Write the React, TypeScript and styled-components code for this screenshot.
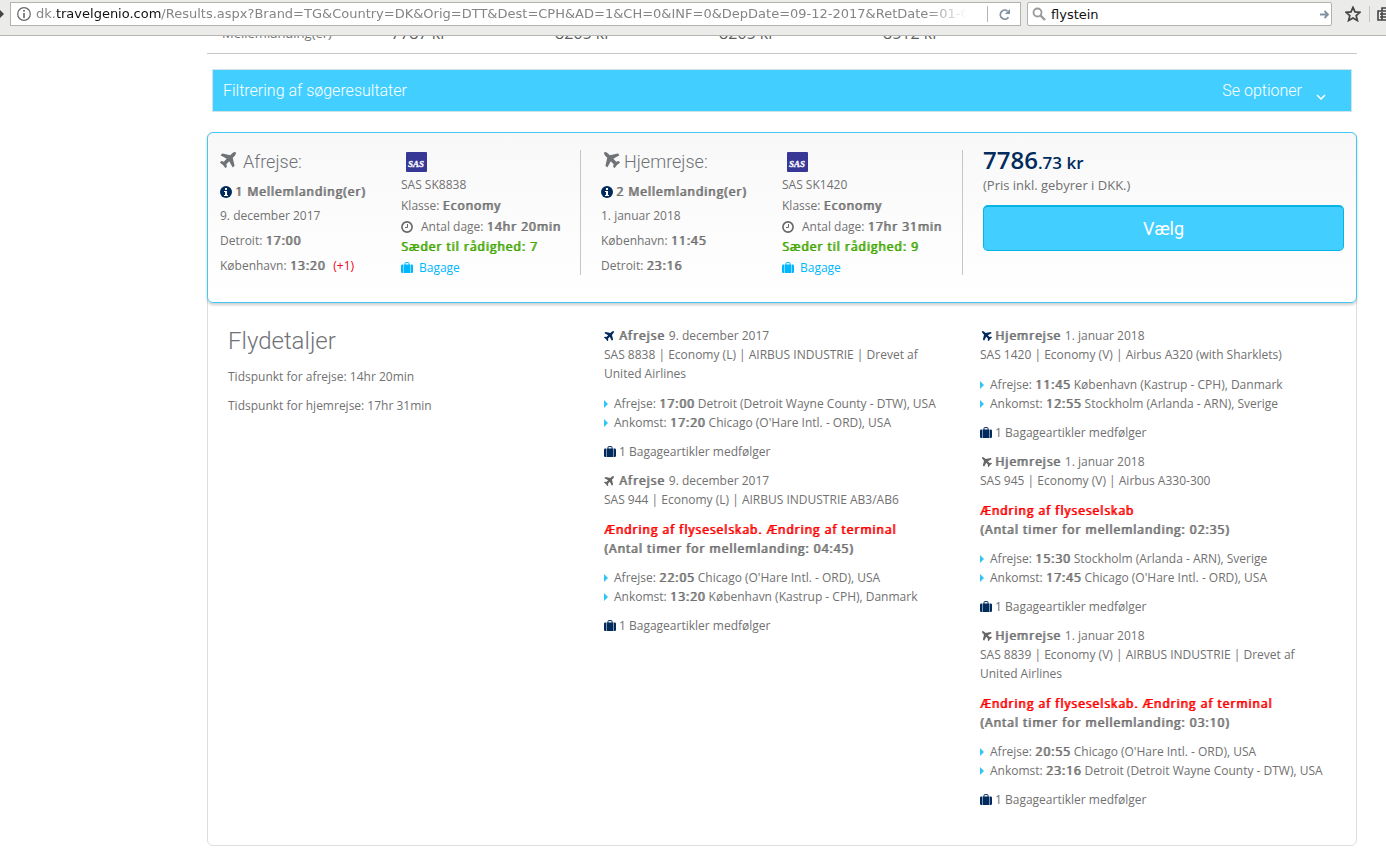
import React from "react";
import styled, { createGlobalStyle, css } from "styled-components";

const Global = createGlobalStyle`
  *{box-sizing:border-box}
  body{margin:0;background:#fff;color:#717171;font:12px/19px "Open Sans",sans-serif}
  h2,h3,p,ul{margin:0;padding:0;font-weight:400}
`;

const strongText = css`
  font-weight:400;letter-spacing:1px;text-shadow:1px 0 0 currentColor;
`;

const Toolbar = styled.header`
  display:flex;align-items:flex-start;height:36px;padding-top:2px;overflow:hidden;
  background:#ebebe9;border-bottom:1px solid #b4b4b0;
`;
const BackEdge = styled.div`width:10px;height:24px;overflow:hidden;display:flex;align-items:center;`;
const UrlBox = styled.div`
  flex:1;min-width:0;height:24px;display:flex;align-items:center;
  background:#fff;border:1px solid #b2b2ae;
`;
const SiteInfo = styled.span`display:flex;flex:none;margin:0 5px 0 6px;`;
const Url = styled.div`
  flex:1;min-width:0;overflow:hidden;white-space:nowrap;color:#858585;
  font:13px/22px "DejaVu Sans",sans-serif;
  mask-image:linear-gradient(to right,#000 calc(100% - 60px),transparent calc(100% - 20px));
  b{font-weight:400;color:#111}
`;
const IconButton = styled.button`
  border:0;padding:0;background:none;display:flex;align-items:center;justify-content:center;
  width:32px;height:16px;flex:none;
`;
const Reload = styled(IconButton)`width:33px;border-left:1px solid #b4b4b4;`;
const SearchBox = styled.label`
  display:flex;align-items:center;width:305px;height:24px;margin-left:6px;padding:0 2px 0 4px;
  background:#fff;border:1px solid #b2b2ae;border-radius:2px;
  input{flex:1;min-width:0;border:0;outline:0;padding:0 0 0 5px;background:none;color:#111;font:13px "DejaVu Sans",sans-serif}
`;
const Tools = styled.div`
  display:flex;align-items:center;width:54px;height:24px;padding-left:5px;overflow:hidden;
  ${IconButton}+${IconButton}{border-left:1px solid #c4c4c4;justify-content:flex-start;padding-left:7px}
`;

const Page = styled.main`padding:0 29px 14px 207px;overflow:hidden;`;
const PriceRow = styled.div`
  display:grid;grid-template-columns:169px repeat(4,164px) 1fr;align-items:end;
  margin-top:-13px;padding:0 0 9px 15px;border-bottom:1px solid #c8c8c8;
  font-size:13px;line-height:21px;
  b{font-weight:400;font-size:16px;color:#5d5d5d}
`;
const FilterBar = styled.button`
  display:flex;justify-content:space-between;align-items:center;width:calc(100% - 10px);height:43px;
  margin:15px 5px 0;padding:0 25px 0 10px;border:1px solid #cfe3ea;background:#42cfff;
  color:#fff;font:300 16px Roboto,sans-serif;
  span{display:flex;align-items:center;gap:14px}
  svg{margin-top:12px}
`;

const Card = styled.section`margin-top:20px;border:1px solid #ddd;border-radius:6px;`;
const Summary = styled.div`
  display:grid;grid-template-columns:361px 382px minmax(0,1fr);align-items:start;min-height:171px;
  margin:-1px;padding:17px 12px 0;border:1px solid #42c8f5;border-radius:6px;
  background:linear-gradient(#f8f8f8,#fff);box-shadow:0 2px 3px rgba(0,0,0,.2);
`;
const Leg = styled.div<{ $back?: boolean }>`
  display:grid;grid-template-columns:181px 1fr;height:125px;border-right:1px solid #c6c6c6;
  padding-left:${(p) => (p.$back ? 20 : 0)}px;
`;
const LegTitle = styled.h2<{ $back?: boolean }>`
  display:flex;align-items:center;gap:${(p) => (p.$back ? 4 : 7)}px;height:23px;
  padding-left:${(p) => (p.$back ? 3 : 0)}px;
  font:300 18px/23px Roboto,sans-serif;color:#6f7276;
  svg{margin-bottom:3px}
`;
const Stops = styled.p`
  display:flex;align-items:center;gap:3px;height:21px;margin:8px 0 1px;white-space:nowrap;
`;
const B = styled.b`${strongText}`;
const LegLine = styled.p`height:25px;line-height:25px;white-space:nowrap;`;
const NextDay = styled.span`color:#f00020;margin-left:8px;`;
const Flight = styled.div`line-height:21px;white-space:nowrap;`;
const Carrier = styled.p`display:flex;align-items:center;height:24px;padding-left:5px;`;
const FlightRow = styled.p`display:flex;align-items:center;height:21px;gap:8px;`;
const Seats = styled.p`height:20px;line-height:20px;color:#42a800;${strongText}`;
const Bag = styled.a`display:flex;align-items:center;gap:6px;height:21px;color:#00b7ff;text-decoration:none;`;
const Offer = styled.div`padding-left:20px;`;
const Price = styled.div`
  font-weight:600;font-size:17px;line-height:20px;color:#002b5c;
  strong{font-weight:600;font-size:24px}
`;
const Note = styled.p`font-size:13px;line-height:24px;`;
const Select = styled.button`
  display:block;width:100%;height:46px;margin-top:8px;border:1px solid #08b4e4;border-top-width:2px;
  border-radius:5px;background:#42cfff;color:#fff;font:400 18px Roboto,sans-serif;
`;

const Details = styled.div`
  display:grid;grid-template-columns:376px 376px minmax(0,1fr);padding:24px 20px 26px;
`;
const DetailTitle = styled.h2`font:300 24px/30px Roboto,sans-serif;margin-bottom:11px;color:#6f7276;`;
const Duration = styled.p`margin-bottom:10px;`;
const Segment = styled.article`padding-right:30px;margin-bottom:10px;`;
const Head = styled.div`margin-bottom:11px;`;
const HeadLine = styled.h3<{ $back?: boolean }>`
  display:flex;align-items:center;font-size:12px;
  svg{margin-left:${(p) => (p.$back ? 2 : 0)}px;margin-right:${(p) => (p.$back ? 3 : 5)}px}
  span{margin-left:4px}
`;
const Change = styled.p`
  ${strongText}
  margin-bottom:10px;
  em{display:block;font-style:normal;color:#f00}
`;
const Stations = styled.ul`
  list-style:none;margin-bottom:10px;white-space:nowrap;
  li{display:flex;align-items:center;gap:4px}
  li::before{content:"";border:solid transparent;border-width:4px 0 4px 4px;border-left-color:#30c5f5;margin-right:2px}
`;
const Included = styled.p`display:flex;align-items:center;gap:3px;`;

const Plane = ({ size, color, back }: { size: number; color: string; back?: boolean }) => (
  <svg width={size} height={size} viewBox="0 0 1408 1408" fill={color} aria-hidden="true">
    <path transform={back ? "rotate(-90 704 704)" : undefined}
      d="M1376 32q44 52 12 148t-108 172l-161 161 160 696q5 19-12 33l-128 96q-7 6-19 6-4 0-7-1-15-3-21-16l-279-508-259 259 53 194q5 17-8 31l-96 96q-9 9-23 9h-2q-15-2-24-13l-189-252-252-189q-11-7-13-23-1-13 9-25l96-97q9-9 23-9 6 0 8 1l194 53 259-259-508-279q-14-8-17-24-2-16 9-27l128-128q14-13 30-8l665 159 160-160q76-76 172-108t148 12z" />
  </svg>
);
const Info = () => (
  <svg width="12" height="12" viewBox="0 0 12 12" aria-hidden="true">
    <circle cx="6" cy="6" r="6" fill="#002b5c" />
    <path d="M5 2h2v2H5zM4 5h3v4h1v1H4V9h1V6H4z" fill="#fff" />
  </svg>
);
const Clock = () => (
  <svg width="12" height="12" viewBox="0 0 12 12" fill="none" stroke="#666" aria-hidden="true">
    <circle cx="6" cy="6" r="5.1" strokeWidth="1.6" /><path d="M6.5 3v3.5H4" />
  </svg>
);
const Case = ({ color }: { color: string }) => (
  <svg width="12" height="11" viewBox="0 0 12 11" fill={color} aria-hidden="true">
    <path d="M2.6 2.500h6.800V11H2.600zM2.100 2.500V11h-.8Q0 11 0 9.700V3.800Q0 2.500 1.300 2.500zM9.900 2.500V11h.8Q12 11 12 9.700V3.800Q12 2.500 10.700 2.500z" />
    <path d="M4 3V1.200Q4 .6 4.600.6h2.800Q8 .6 8 1.200V3" fill="none" stroke={color} />
  </svg>
);
const SasLogo = styled.svg`
  text{font:italic 700 9px "Liberation Serif",serif;fill:#fff;stroke:#fff;stroke-width:.3px}
`;
const Sas = () => (
  <SasLogo width="21" height="20" viewBox="0 0 21 20" role="img" aria-label="SAS">
    <rect width="21" height="20" rx="1" fill="#373895" />
    <text x="10" y="15" textAnchor="middle">SAS</text>
  </SasLogo>
);

type LegData = { back?: boolean; title: string; stops: string; date: string; from: string; dep: string; to: string; arr: string; next?: string; code: string; time: string; seats: number };
const legs: LegData[] = [
  { title: "Afrejse:", stops: "1 Mellemlanding(er)", date: "9. december 2017", from: "Detroit:", dep: "17:00", to: "København:", arr: "13:20", next: "(+1)", code: "SAS SK8838", time: "14hr 20min", seats: 7 },
  { back: true, title: "Hjemrejse:", stops: "2 Mellemlanding(er)", date: "1. januar 2018", from: "København:", dep: "11:45", to: "Detroit:", arr: "23:16", code: "SAS SK1420", time: "17hr 31min", seats: 9 },
];

type Seg = { info: string; change?: string; wait?: string; dep: [string, string]; arr: [string, string] };
const outbound: Seg[] = [
  { info: "SAS 8838 | Economy (L) | AIRBUS INDUSTRIE | Drevet af United Airlines", dep: ["17:00", "Detroit (Detroit Wayne County - DTW), USA"], arr: ["17:20", "Chicago (O'Hare Intl. - ORD), USA"] },
  { info: "SAS 944 | Economy (L) | AIRBUS INDUSTRIE AB3/AB6", change: "Ændring af flyseselskab. Ændring af terminal", wait: "04:45", dep: ["22:05", "Chicago (O'Hare Intl. - ORD), USA"], arr: ["13:20", "København (Kastrup - CPH), Danmark"] },
];
const inbound: Seg[] = [
  { info: "SAS 1420 | Economy (V) | Airbus A320 (with Sharklets)", dep: ["11:45", "København (Kastrup - CPH), Danmark"], arr: ["12:55", "Stockholm (Arlanda - ARN), Sverige"] },
  { info: "SAS 945 | Economy (V) | Airbus A330-300", change: "Ændring af flyseselskab", wait: "02:35", dep: ["15:30", "Stockholm (Arlanda - ARN), Sverige"], arr: ["17:45", "Chicago (O'Hare Intl. - ORD), USA"] },
  { info: "SAS 8839 | Economy (V) | AIRBUS INDUSTRIE | Drevet af United Airlines", change: "Ændring af flyseselskab. Ændring af terminal", wait: "03:10", dep: ["20:55", "Chicago (O'Hare Intl. - ORD), USA"], arr: ["23:16", "Detroit (Detroit Wayne County - DTW), USA"] },
];

const Segments = ({ items, back, name, date }: { items: Seg[]; back?: boolean; name: string; date: string }) => (
  <div>
    {items.map((s, i) => (
      <Segment key={s.info}>
        <Head>
          <HeadLine $back={back}>
            <Plane size={10} color={i === 0 ? "#002b5c" : "#666"} back={back} />
            <B>{name}</B><span>{date}</span>
          </HeadLine>
          <p>{s.info}</p>
        </Head>
        {s.change && <Change><em>{s.change}</em>(Antal timer for mellemlanding: {s.wait})</Change>}
        <Stations>
          <li><span>Afrejse: <B>{s.dep[0]}</B> {s.dep[1]}</span></li>
          <li><span>Ankomst: <B>{s.arr[0]}</B> {s.arr[1]}</span></li>
        </Stations>
        <Included><Case color="#002b5c" />1 Bagageartikler medfølger</Included>
      </Segment>
    ))}
  </div>
);

export default function App() {
  return (
    <>
      <Global />
      <Toolbar>
        <BackEdge><svg width="6" height="12" viewBox="0 0 6 12"><path d="M0 2l4 4-4 4z" fill="#444" /></svg></BackEdge>
        <UrlBox>
          <SiteInfo aria-hidden="true">
            <svg width="14" height="14" viewBox="0 0 14 14" fill="none" stroke="#666"><circle cx="7" cy="7" r="6.3" strokeWidth="1.2" /><path d="M7 6v5M7 3v1.700" strokeWidth="1.6" /></svg>
          </SiteInfo>
          <Url>dk.<b>travelgenio.com</b>/Results.aspx?Brand=TG&amp;Country=DK&amp;Orig=DTT&amp;Dest=CPH&amp;AD=1&amp;CH=0&amp;INF=0&amp;DepDate=09-12-2017&amp;RetDate=01-0</Url>
          <Reload aria-label="Genindlæs">
            <svg width="13" height="13" viewBox="0 0 13 13"><path d="M10.500 9.300A4.500 4.500 0 1 1 9.500 3" fill="none" stroke="#8290a0" strokeWidth="1.8" /><path d="M12 1v5H7z" fill="#8290a0" /></svg>
          </Reload>
        </UrlBox>
        <SearchBox>
          <svg width="14" height="14" viewBox="0 0 14 14" fill="none" stroke="#999"><circle cx="5.5" cy="5.5" r="4" strokeWidth="1.8" /><path d="M8.500 8.500l4.500 4.500" strokeWidth="2.4" /></svg>
          <input aria-label="Søg" defaultValue="flystein" />
          <svg width="9" height="9" viewBox="0 0 9 9" fill="none" stroke="#8290a0" strokeWidth="1.8"><path d="M0 4.500h8M4.500 1L8 4.500 4.500 8" /></svg>
        </SearchBox>
        <Tools>
          <IconButton aria-label="Bogmærke">
            <svg width="16" height="16" viewBox="0 0 16 16"><path d="M8 1.300l2 4.600 5 .4-3.800 3.300 1.200 4.900L8 11.900l-4.400 2.600 1.200-4.900L1 6.300l5-.4z" fill="none" stroke="#444" strokeWidth="1.7" /></svg>
          </IconButton>
          <IconButton aria-label="Bibliotek">
            <svg width="16" height="14" viewBox="0 0 16 14" fill="none" stroke="#444" strokeWidth="1.6"><path d="M1 4h14v9H1zM5 4V1h6v3M3 7h10M3 10h10M5 5v8" /></svg>
          </IconButton>
        </Tools>
      </Toolbar>
      <Page>
        <PriceRow><span>Mellemlanding(er)</span><b>7787 kr</b><b>8265 kr</b><b>8265 kr</b><b>8512 kr</b></PriceRow>
        <FilterBar>
          Filtrering af søgeresultater
          <span>Se optioner<svg width="10" height="6" viewBox="0 0 10 6"><path d="M1 1l4 4 4-4" fill="none" stroke="#fff" strokeWidth="1.5" /></svg></span>
        </FilterBar>
        <Card>
          <Summary>
            {legs.map((l) => (
              <Leg key={l.title} $back={l.back}>
                <div>
                  <LegTitle $back={l.back}><Plane size={16} color="#6f7276" back={l.back} />{l.title}</LegTitle>
                  <Stops><Info /><B>{l.stops}</B></Stops>
                  <LegLine>{l.date}</LegLine>
                  <LegLine>{l.from} <B>{l.dep}</B></LegLine>
                  <LegLine>{l.to} <B>{l.arr}</B>{l.next && <NextDay>{l.next}</NextDay>}</LegLine>
                </div>
                <Flight>
                  <Carrier><Sas /></Carrier>
                  <p>{l.code}</p>
                  <p>Klasse: <B>Economy</B></p>
                  <FlightRow><Clock /><span>Antal dage: <B>{l.time}</B></span></FlightRow>
                  <Seats>Sæder til rådighed: {l.seats}</Seats>
                  <Bag href="#bagage"><Case color="#00b7ff" />Bagage</Bag>
                </Flight>
              </Leg>
            ))}
            <Offer>
              <Price><strong>7786</strong>.73 kr</Price>
              <Note>(Pris inkl. gebyrer i DKK.)</Note>
              <Select>Vælg</Select>
            </Offer>
          </Summary>
          <Details>
            <div>
              <DetailTitle>Flydetaljer</DetailTitle>
              <Duration>Tidspunkt for afrejse: 14hr 20min</Duration>
              <Duration>Tidspunkt for hjemrejse: 17hr 31min</Duration>
            </div>
            <Segments items={outbound} name="Afrejse" date="9. december 2017" />
            <Segments items={inbound} back name="Hjemrejse" date="1. januar 2018" />
          </Details>
        </Card>
      </Page>
    </>
  );
}
